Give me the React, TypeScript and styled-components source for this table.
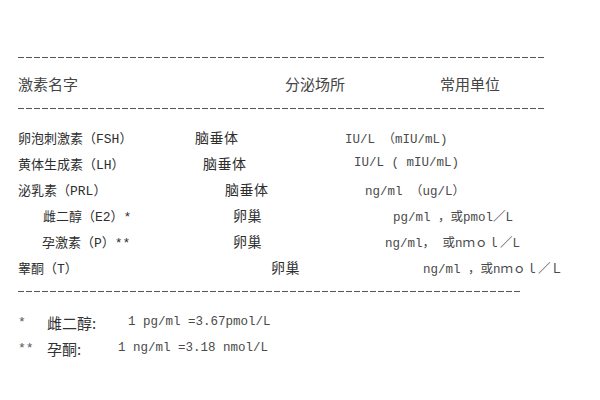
import React from "react";
import styled, { createGlobalStyle } from "styled-components";

const Global = createGlobalStyle`
  html, body { margin: 0; padding: 0; background: #fff; }
  body { width: 600px; height: 400px; overflow: hidden; }
`;

const Page = styled.div`
  width: 600px;
  height: 400px;
  box-sizing: border-box;
  padding: 57px 0 0 18px;
  background: #fff;
  color: #333;
  font-family: "Liberation Mono", "Noto Sans CJK SC", monospace;
  font-size: 13px;
`;

const Dashes = styled.div<{ $w: number; $mt?: number }>`
  width: ${(p) => p.$w}px;
  height: 1px;
  margin-top: ${(p) => p.$mt ?? 0}px;
  background: repeating-linear-gradient(
    to right,
    #555 0 6px,
    transparent 6px 8px
  );
`;

const HeaderRow = styled.div`
  display: grid;
  grid-template-columns: 267px 155px auto;
  height: 50px;
  align-items: center;
  font-family: "Noto Sans CJK SC", sans-serif;
  font-size: 15px;
  color: #444;
`;

const Table = styled.div`
  margin-top: 15px;
  display: flex;
  flex-direction: column;
`;

const Row = styled.div<{ $cols: string }>`
  display: grid;
  grid-template-columns: ${(p) => p.$cols};
  height: 26px;
  align-items: center;
  white-space: pre;
`;

const Name = styled.span<{ $indent?: number }>`
  padding-left: ${(p) => p.$indent ?? 0}px;
  color: #2e2e2e;
`;

const Place = styled.span`
  font-family: "Noto Sans CJK SC", sans-serif;
  font-size: 14px;
  letter-spacing: 0.5px;
  color: #2e2e2e;
`;

const Unit = styled.span`
  color: #4a4a4a;
  font-size: 12.5px;
`;

const Notes = styled.div`
  margin-top: 17px;
  display: flex;
  flex-direction: column;
`;

const NoteLabel = styled.span`
  font-family: "Noto Sans CJK SC", sans-serif;
  font-size: 15px;
  color: #333;
`;

const Star = styled.span`
  color: #555;
`;

const rows = [
  { name: "卵泡刺激素（FSH）", indent: 0, cols: "177px 150px auto", place: "脑垂体", unit: "IU/L （mIU/mL)" },
  { name: "黄体生成素（LH）", indent: 0, cols: "185px 151px auto", place: "脑垂体", unit: "IU/L ( mIU/mL)" },
  { name: "泌乳素（PRL）", indent: 0, cols: "207px 140px auto", place: "脑垂体", unit: "ng/ml （ug/L）" },
  { name: "雌二醇（E2）*", indent: 25, cols: "215px 160px auto", place: "卵巢", unit: "pg/ml ，或pmol／L" },
  { name: "孕激素（P）**", indent: 24, cols: "215px 152px auto", place: "卵巢", unit: "ng/ml， 或nｍｏｌ／L" },
  { name: "睾酮（T）", indent: 0, cols: "253px 152px auto", place: "卵巢", unit: "ng/ml ，或nｍｏｌ／Ｌ" },
];

export default function App() {
  return (
    <>
      <Global />
      <Page>
        <Dashes $w={527} />
        <HeaderRow>
          <span>激素名字</span>
          <span>分泌场所</span>
          <span>常用单位</span>
        </HeaderRow>
        <Dashes $w={527} />
        <Table>
          {rows.map((r) => (
            <Row key={r.name} $cols={r.cols}>
              <Name $indent={r.indent}>{r.name}</Name>
              <Place>{r.place}</Place>
              <Unit>{r.unit}</Unit>
            </Row>
          ))}
        </Table>
        <Dashes $w={504} $mt={11} />
        <Notes>
          <Row $cols="29px 81px auto">
            <Star>*</Star>
            <NoteLabel>雌二醇:</NoteLabel>
            <Unit>1 pg/ml =3.67pmol/L</Unit>
          </Row>
          <Row $cols="29px 71px auto">
            <Star>**</Star>
            <NoteLabel>孕酮:</NoteLabel>
            <Unit>1 ng/ml =3.18 nmol/L</Unit>
          </Row>
        </Notes>
      </Page>
    </>
  );
}
